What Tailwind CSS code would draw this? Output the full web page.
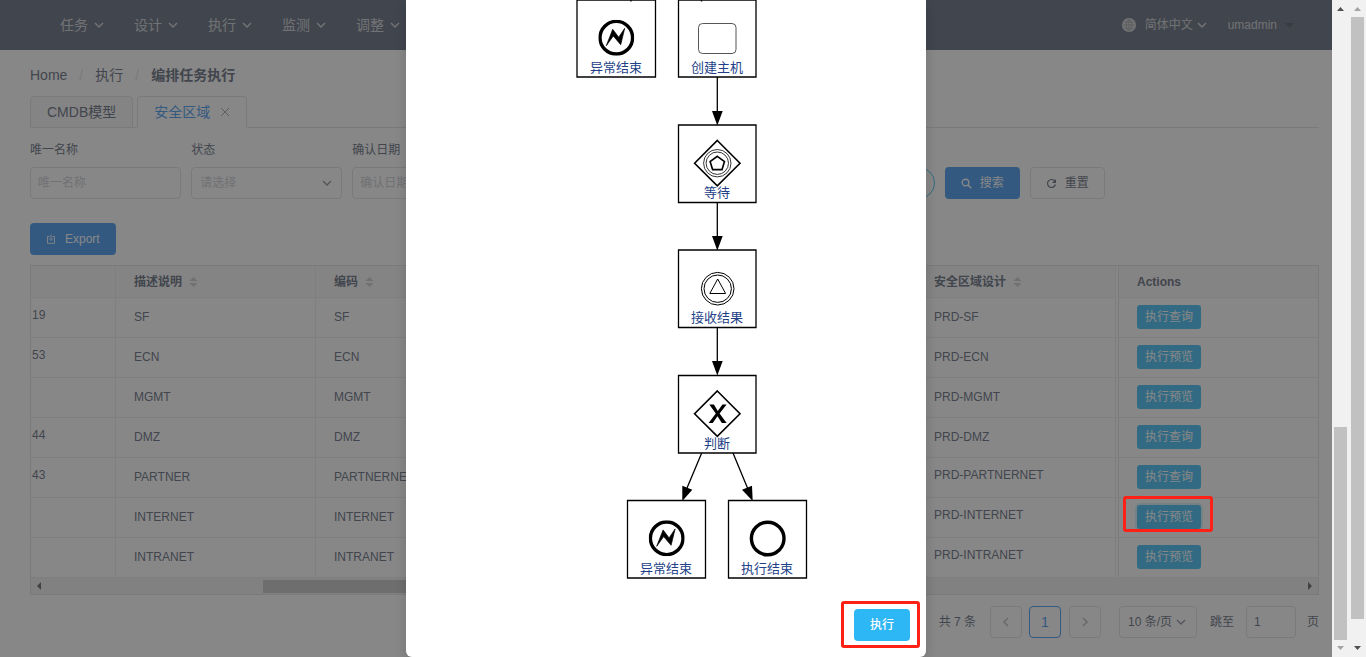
<!DOCTYPE html>
<html lang="zh-CN">
<head>
<meta charset="utf-8">
<meta name="viewport" content="width=device-width, initial-scale=1">
<title>编排任务执行</title>
<script src="https://cdn.jsdelivr.net/npm/@tailwindcss/browser@4"></script>
</head>
<body class="flex min-h-screen bg-white font-['Liberation_Sans','Noto_Sans_CJK_SC',sans-serif] text-xs text-[#515a6e]">
<svg class="hidden">
  <symbol id="chev" viewBox="0 0 10 10"><path d="M1 3l4 4 4-4" fill="none" stroke="currentColor" stroke-width="1.5"/></symbol>
  <symbol id="sort" viewBox="0 0 9 10"><path d="M4.500 0l4 4h-8zM4.500 10l4-4h-8z" fill="#c5c8ce"/></symbol>
  <symbol id="bolt" viewBox="0 0 36 36"><circle cx="18" cy="18" r="16.300" fill="none" stroke="#000" stroke-width="3.400"/><path d="M8 26L14.400 9.600l6 8 6-9L22.400 25 15 16.300z" stroke="#000" stroke-width=".7"/></symbol>
</svg>

<div class="relative min-w-0 flex-1 overflow-hidden">
  <header class="flex h-[50px] items-center justify-between bg-[#515a6e] pl-[60px] pr-[38px] text-white/70">
    <nav class="flex gap-[30px] text-sm">
      <a href="#" class="flex items-center gap-[6px]">任务<svg class="size-[10px]"><use href="#chev"/></svg></a>
      <a href="#" class="flex items-center gap-[6px]">设计<svg class="size-[10px]"><use href="#chev"/></svg></a>
      <a href="#" class="flex items-center gap-[6px]">执行<svg class="size-[10px]"><use href="#chev"/></svg></a>
      <a href="#" class="flex items-center gap-[6px]">监测<svg class="size-[10px]"><use href="#chev"/></svg></a>
      <a href="#" class="flex items-center gap-[6px]">调整<svg class="size-[10px]"><use href="#chev"/></svg></a>
    </nav>
    <div class="flex items-center gap-[21px]">
      <button class="flex items-center">
        <svg class="mr-[9px] size-[14px]" viewBox="0 0 14 14"><circle cx="7" cy="7" r="7" fill="#ccc"/><g fill="none" stroke="#8d919b" stroke-width=".8"><ellipse cx="7" cy="7" rx="3" ry="5.500"/><path d="M7 1v12M1.500 7h11M2.500 4h9M2.500 10h9"/></g></svg>
        简体中文<svg class="ml-[4px] size-[10px]"><use href="#chev"/></svg>
      </button>
      <button class="flex items-center gap-2">umadmin<svg class="h-[5px] w-[9px] text-[#3a4152]" viewBox="0 0 9 5"><path d="M0 0h9L4.500 5z" fill="currentColor"/></svg></button>
    </div>
  </header>

  <main class="pb-[19px] pl-[30px] pr-[13px] pt-[14px]">
    <nav class="mb-[11px] flex h-[21px] items-center gap-3 text-sm">
      <a href="#">Home</a><span class="text-[#dcdee2]">/</span><a href="#">执行</a><span class="text-[#dcdee2]">/</span><span class="font-bold">编排任务执行</span>
    </nav>

    <div class="mb-[13px] flex h-8 gap-1 border-b border-[#dcdee2] text-sm">
      <button class="h-8 rounded-t border border-[#dcdee2] bg-[#f8f8f9] px-4">CMDB模型</button>
      <button class="flex h-8 items-center gap-[10px] rounded-t border border-b-white border-[#dcdee2] bg-white px-4 text-[#2d8cf0]">安全区域<svg class="size-[10px] text-[#999]" viewBox="0 0 10 10"><path d="M1 1l8 8M9 1l-8 8" stroke="currentColor" fill="none"/></svg></button>
    </div>

    <form class="mb-6 grid grid-cols-8">
      <div class="pr-[10px]">
        <label for="name" class="mb-2 block h-[18px] leading-[18px]">唯一名称</label>
        <input id="name" placeholder="唯一名称" class="block h-8 w-full rounded border border-[#dcdee2] px-[7px] placeholder:text-[#c5c8ce]">
      </div>
      <div class="pr-[10px]">
        <label for="status" class="mb-2 block h-[18px] leading-[18px]">状态</label>
        <div class="relative">
          <select id="status" class="block h-8 w-full appearance-none rounded border border-[#dcdee2] px-2 text-[#c5c8ce]"><option>请选择</option></select>
          <svg class="pointer-events-none absolute right-[10px] top-[11px] size-[10px] text-[#808695]"><use href="#chev"/></svg>
        </div>
      </div>
      <div class="pr-[10px]">
        <label for="date" class="mb-2 block h-[18px] leading-[18px]">确认日期</label>
        <input id="date" placeholder="确认日期" class="block h-8 w-full rounded border border-[#dcdee2] px-[7px] placeholder:text-[#c5c8ce]">
      </div>
      <div class="col-span-3 col-start-6 flex items-end gap-[10px]">
        <button type="button" aria-label="更多" class="h-8 w-[99px] rounded-full border border-[#2db7f5]"></button>
        <button type="button" class="flex h-8 items-center gap-2 rounded bg-[#2d8cf0] px-4 text-white"><svg class="size-[11px]" viewBox="0 0 11 11"><g fill="none" stroke="currentColor" stroke-width="1.400"><circle cx="4.500" cy="4.500" r="3.300"/><path d="M7 7l3.300 3.300"/></g></svg>搜索</button>
        <button type="button" class="flex h-8 items-center gap-2 rounded border border-[#dcdee2] px-[15px] text-[#515a6e]"><svg class="size-[11px]" viewBox="0 0 11 11"><path d="M8.800 3.200A4 4 0 1 0 9.400 6.500" fill="none" stroke="currentColor" stroke-width="1.200"/><path d="M10 1v4H6z" fill="currentColor"/></svg>重置</button>
      </div>
    </form>

    <button class="mb-[10px] flex h-8 items-center gap-[9px] rounded bg-[#2d8cf0] px-[16px] text-white"><svg class="size-[10px]" viewBox="0 0 10 10"><path d="M3.500 2.500h-2v6.800h7V2.500h-2M5 .5v5M3 4.500l2 2 2-2" fill="none" stroke="currentColor" stroke-width=".9"/></svg>Export</button>

    <div class="border border-[#dcdee2]">
      <table class="w-full table-fixed border-separate border-spacing-0 text-left [&_td]:h-10 [&_td]:whitespace-nowrap [&_td]:border-b [&_td]:border-r [&_td]:border-[#e8eaec] [&_td]:p-0 [&_td]:pb-[2px] [&_td]:pl-[18px] [&_th]:h-8 [&_th]:border-b [&_th]:border-r [&_th]:border-[#e8eaec] [&_th]:bg-[#f8f8f9] [&_th]:p-0 [&_th]:pl-[18px] [&_tr>*:last-child]:border-l-2 [&_tr>*:last-child]:border-r-0 [&_tr>*:last-child]:border-l-white [&_tr>*:last-child]:pl-[19px]! [&_tr>*:last-child]:shadow-[inset_1px_0_0_#dcdee2] [&_tr>td:first-child]:pb-[6px] [&_tr>td:first-child]:pl-px">
        <colgroup><col class="w-[85px]"><col class="w-[200px]"><col class="w-[200px]"><col><col class="w-[200px]"><col class="w-[202px]"></colgroup>
        <thead>
          <tr><th></th>
            <th><span class="flex items-center gap-[7px]">描述说明<svg class="h-[10px] w-[9px]"><use href="#sort"/></svg></span></th>
            <th><span class="flex items-center gap-[7px]">编码<svg class="h-[10px] w-[9px]"><use href="#sort"/></svg></span></th>
            <th></th>
            <th><span class="flex items-center gap-[7px]">安全区域设计<svg class="h-[10px] w-[9px]"><use href="#sort"/></svg></span></th>
            <th>Actions</th></tr>
        </thead>
        <tbody>
          <tr><td>19</td><td>SF</td><td>SF</td><td></td><td>PRD-SF</td><td><button class="block h-6 rounded-[3px] bg-[#2db7f5] px-2 text-white">执行查询</button></td></tr>
          <tr><td>53</td><td>ECN</td><td>ECN</td><td></td><td>PRD-ECN</td><td><button class="block h-6 rounded-[3px] bg-[#2db7f5] px-2 text-white">执行预览</button></td></tr>
          <tr><td></td><td>MGMT</td><td>MGMT</td><td></td><td>PRD-MGMT</td><td><button class="block h-6 rounded-[3px] bg-[#2db7f5] px-2 text-white">执行预览</button></td></tr>
          <tr><td>44</td><td>DMZ</td><td>DMZ</td><td></td><td>PRD-DMZ</td><td><button class="block h-6 rounded-[3px] bg-[#2db7f5] px-2 text-white">执行查询</button></td></tr>
          <tr><td>43</td><td>PARTNER</td><td>PARTNERNET</td><td></td><td class="pb-[6px]!">PRD-PARTNERNET</td><td><button class="block h-6 rounded-[3px] bg-[#2db7f5] px-2 text-white">执行查询</button></td></tr>
          <tr><td></td><td>INTERNET</td><td>INTERNET</td><td></td><td class="pb-[6px]!">PRD-INTERNET</td><td><button class="block h-6 rounded-[3px] bg-[#2db7f5] px-2 text-white shadow-[0_0_0_2px_rgba(45,183,245,.2)]">执行预览</button></td></tr>
          <tr><td></td><td>INTRANET</td><td>INTRANET</td><td></td><td class="pb-[6px]!">PRD-INTRANET</td><td><button class="block h-6 rounded-[3px] bg-[#2db7f5] px-2 text-white">执行预览</button></td></tr>
        </tbody>
      </table>
      <div class="flex h-4 items-center justify-between bg-[#f1f1f1] px-[5px]">
        <svg class="h-2 w-[5px]" viewBox="0 0 5 8"><path d="M5 0v8L1 4z" fill="#505050"/></svg>
        <div class="ml-[222px] mr-auto h-[13px] w-1/2 bg-[#c1c1c1]"></div>
        <svg class="h-2 w-[5px]" viewBox="0 0 5 8"><path d="M0 0v8l4-4z" fill="#505050"/></svg>
      </div>
    </div>

    <div class="mt-[11px] flex h-8 items-center justify-end">
      <span class="mr-[14px]">共 7 条</span>
      <button aria-label="上一页" class="mr-[7px] flex size-8 items-center justify-center rounded border border-[#dcdee2] text-[#b0b3ba]"><svg class="size-[10px] rotate-90"><use href="#chev"/></svg></button>
      <button class="mr-2 size-8 rounded border border-[#2d8cf0] text-sm text-[#2d8cf0]">1</button>
      <button aria-label="下一页" class="mr-[18px] flex size-8 items-center justify-center rounded border border-[#dcdee2] text-[#b0b3ba]"><svg class="size-[10px] -rotate-90"><use href="#chev"/></svg></button>
      <div class="relative mr-[13px]">
        <select aria-label="每页条数" class="block h-8 w-[78px] appearance-none rounded border border-[#dcdee2] pl-2"><option>10 条/页</option></select>
        <svg class="pointer-events-none absolute right-[11px] top-[11px] size-[10px] text-[#808695]"><use href="#chev"/></svg>
      </div>
      <label for="jump" class="mr-3">跳至</label>
      <input id="jump" value="1" class="mr-[11px] h-8 w-[50px] rounded border border-[#dcdee2] px-[7px]">
      <span>页</span>
    </div>
  </main>

  <div class="absolute inset-0 bg-[#373737]/60"></div>
  <div class="absolute right-[119px] top-[496px] h-9 w-[90px] rounded-[3px] border-3 border-[#ff2116]"></div>

  <section role="dialog" aria-label="执行预览" class="absolute left-1/2 top-0 flex w-[520px] -translate-x-1/2 flex-col rounded-b-md bg-white shadow-[0_4px_12px_rgba(0,0,0,.15)]">
    <svg class="block w-full" viewBox="406 0 520 601" font-size="13" text-anchor="middle">
      <g fill="none" stroke="#000" stroke-width="1.300">
        <path d="M577 .2h78.500V77H577zM678.500 .2H756V77h-77.500zM631 0v1.500M701.500 0v1.500"/>
        <path d="M678.500 125H756v77.500h-77.500zM678.500 250H756v77.500h-77.500zM678.500 375.500H756V453h-77.500zM627.500 500.500h78V578h-78zM728.500 500.500h78V578h-78z"/>
        <path d="M717.300 77v36M717.300 202.500v36M717.300 327.500v36M701.700 453L687 488M733 453l14.500 35"/>
      </g>
      <path d="M712 111h10.700l-5.400 14.500zM712 236h10.700l-5.400 14.500zM712 361h10.700l-5.400 14.500zM682.300 485.700l10 4L682.300 501zM752 485.700l-10 4L752.700 501z"/>
      <use href="#bolt" x="598.300" y="19.700" width="36" height="36"/>
      <use href="#bolt" x="648.700" y="520.300" width="36" height="36"/>
      <circle cx="767.700" cy="538.500" r="16.300" fill="none" stroke="#000" stroke-width="3.400"/>
      <rect x="698.500" y="23.500" width="37.500" height="30" rx="4" fill="none" stroke="#555"/>
      <g fill="none" stroke="#000">
        <path d="M717.300 140.500l22.700 22.700-22.700 22.700-22.700-22.700zM717.300 391l22.700 22.700-22.700 22.700-22.700-22.700z" stroke-width="1.600"/>
        <circle cx="717.300" cy="163.200" r="13.700" stroke-width=".8"/><circle cx="717.300" cy="163.200" r="11.200" stroke-width=".8"/>
        <path d="M717.300 156.300l7.200 5.200-2.500 8.100h-9.400l-2.500-8.100z" stroke-width="1.600"/>
        <circle cx="717.700" cy="288.700" r="16.300"/><circle cx="717.700" cy="288.700" r="13.700"/>
        <path d="M717.700 279l7.900 14.500h-15.800z"/>
      </g>
      <path d="M709.300 404.500h4.600l3.900 6.500 4.600-6.500h4.200l-7 9 7 9.500h-4.700l-4.400-6.800-4.800 6.800h-4.100l7.200-9.500z"/>
      <g fill="#233f88">
        <text x="616" y="72">异常结束</text><text x="717" y="72">创建主机</text>
        <text x="717" y="197">等待</text><text x="717" y="322">接收结果</text><text x="717" y="448">判断</text>
        <text x="666" y="573">异常结束</text><text x="767" y="573">执行结束</text>
      </g>
    </svg>
    <footer class="flex justify-end px-4 pb-4 pt-2">
      <div class="relative">
        <button class="block h-8 w-14 rounded bg-[#2db7f5] font-medium text-white">执行</button>
        <div class="pointer-events-none absolute -left-[13px] -right-[10px] -top-2 -bottom-[7px] rounded-[3px] border-3 border-[#ff2116]"></div>
      </div>
    </footer>
  </section>
</div>

<div class="flex w-[34px] shrink-0 bg-[#f1f1f1]" aria-hidden="true">
  <div class="flex w-[17px] flex-col items-center py-[7px]">
    <svg class="h-1 w-[7px]" viewBox="0 0 7 4"><path d="M0 4h7L3.500 0z" fill="#505050"/></svg>
    <div class="mb-[6px] mt-auto h-[213px] w-[13px] bg-[#c1c1c1]"></div>
    <svg class="h-1 w-[7px]" viewBox="0 0 7 4"><path d="M0 0h7L3.500 4z" fill="#a3a3a3"/></svg>
  </div>
  <div class="flex w-[17px] flex-col items-center py-[7px]">
    <svg class="mb-[6px] h-1 w-[7px]" viewBox="0 0 7 4"><path d="M0 4h7L3.500 0z" fill="#a3a3a3"/></svg>
    <div class="mb-auto h-[602px] w-[13px] bg-[#c1c1c1]"></div>
    <svg class="h-1 w-[7px]" viewBox="0 0 7 4"><path d="M0 0h7L3.500 4z" fill="#505050"/></svg>
  </div>
</div>
</body>
</html>
